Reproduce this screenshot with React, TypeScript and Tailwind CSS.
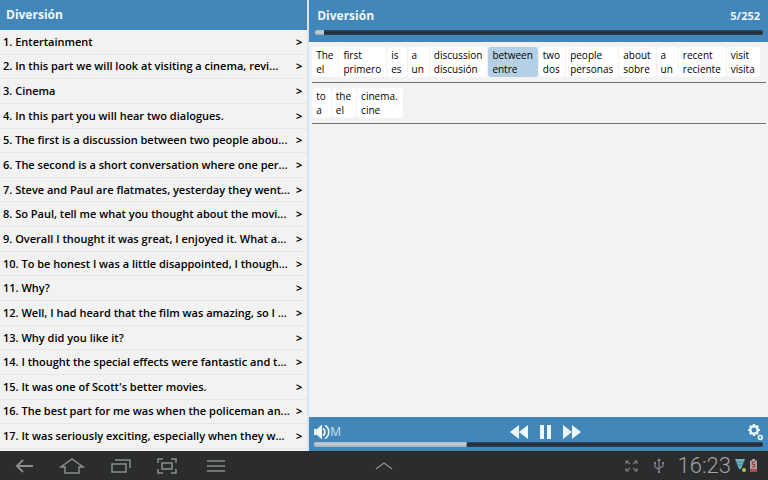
import { useState } from 'react';

interface Word {
  source: string;
  target: string;
}

const sentences = [
  'Entertainment',
  'In this part we will look at visiting a cinema, revi...',
  'Cinema',
  'In this part you will hear two dialogues.',
  'The first is a discussion between two people abou...',
  'The second is a short conversation where one per...',
  'Steve and Paul are flatmates, yesterday they went...',
  'So Paul, tell me what you thought about the movi...',
  'Overall I thought it was great, I enjoyed it. What a...',
  'To be honest I was a little disappointed, I though...',
  'Why?',
  'Well, I had heard that the film was amazing, so I ...',
  'Why did you like it?',
  'I thought the special effects were fantastic and t...',
  "It was one of Scott's better movies.",
  'The best part for me was when the policeman an...',
  'It was seriously exciting, especially when they w...',
];

const lines: Word[][] = [
  [
    { source: 'The', target: 'el' },
    { source: 'first', target: 'primero' },
    { source: 'is', target: 'es' },
    { source: 'a', target: 'un' },
    { source: 'discussion', target: 'discusión' },
    { source: 'between', target: 'entre' },
    { source: 'two', target: 'dos' },
    { source: 'people', target: 'personas' },
    { source: 'about', target: 'sobre' },
    { source: 'a', target: 'un' },
    { source: 'recent', target: 'reciente' },
    { source: 'visit', target: 'visita' },
  ],
  [
    { source: 'to', target: 'a' },
    { source: 'the', target: 'el' },
    { source: 'cinema.', target: 'cine' },
  ],
];

function Track({ label, value, onChange }: { label: string; value: number; onChange: (v: number) => void }) {
  return (
    <input
      type="range"
      aria-label={label}
      value={value}
      onChange={(e) => onChange(Number(e.target.value))}
      className="block h-[5px] w-full appearance-none rounded-xs bg-no-repeat [&::-webkit-slider-thumb]:appearance-none"
      style={{
        backgroundImage:
          'linear-gradient(#b4bcc4, #c3cbd3, #a3adb6), linear-gradient(#34495c, #1f2d3c, #2c4054)',
        backgroundSize: `${value}% 100%, 100% 100%`,
      }}
    />
  );
}

function SentenceList() {
  return (
    <aside className="flex w-2/5 flex-col">
      <h1 className="bg-[#4386ba] px-1.5 py-[5px] text-[12px] leading-5 font-bold text-[#eef8fc]">Diversión</h1>
      <ol className="flex flex-1 flex-col pb-0.5">
        {sentences.map((sentence, index) => (
          <li key={index} className="flex flex-1 border-b border-[#e6e6e6]">
            <button
              type="button"
              className="flex flex-1 items-center justify-between pr-[5px] pl-[3px] text-left text-[11px] leading-4 font-semibold whitespace-nowrap text-black"
            >
              <span>{index + 1}. {sentence}</span>
              <span aria-hidden="true" className="font-bold">&gt;</span>
            </button>
          </li>
        ))}
      </ol>
    </aside>
  );
}

function Player() {
  const [position, setPosition] = useState(2);
  const [seek, setSeek] = useState(34);
  const [selected, setSelected] = useState('0-5');

  return (
    <main className="flex min-w-0 flex-1 flex-col">
      <header className="bg-[#4386ba] pr-[5px] pb-[7px] pl-1.5 text-[#eef8fc]">
        <div className="flex justify-between pt-1.5 pr-[3px] pb-1 pl-0.5 text-[12px] leading-5 font-bold">
          <h2>Diversión</h2>
          <span className="text-[11px]">5/252</span>
        </div>
        <Track label="Sentence" value={position} onChange={setPosition} />
      </header>

      <section className="flex-1 pr-0.5 pl-[3px]">
        {lines.map((line, row) => (
          <div key={row} className="flex gap-px border-b border-[#707070] py-[5px]">
            {line.map((word, col) => (
              <button
                key={col}
                type="button"
                onClick={() => setSelected(`${row}-${col}`)}
                className={`rounded-[3px] py-px pr-[5px] pl-1 text-left text-[10px] leading-[14px] text-black ${
                  selected === `${row}-${col}` ? 'bg-[#b5d0e5]' : 'bg-white'
                }`}
              >
                <span className="block">{word.source}</span>
                <span className="block">{word.target}</span>
              </button>
            ))}
          </div>
        ))}
      </section>

      <footer className="bg-[#4386ba] pt-1 pr-[5px] pb-1 pl-[5px] text-[#eef8fc]">
        <div className="flex h-[21px] items-center justify-between">
          <button type="button" aria-label="Volume" className="flex items-center text-[12px] leading-4">
            <svg width="16" height="16" viewBox="0 0 16 16" fill="none" stroke="currentColor">
              <path d="M0 5h3l5-4.500v15L3 11H0z" fill="currentColor" stroke="none" />
              <path d="M9 4.500c2.500 1.500 2.500 5.500 0 7" strokeWidth="1.800" />
              <path d="M11 1.500c5 2.500 5 10.500 0 13" strokeWidth="1.600" />
            </svg>
            <span className="text-[#c9e2f0]">M</span>
          </button>
          <div className="flex items-center gap-3 pl-1">
            <button type="button" aria-label="Rewind">
              <svg width="18" height="14" viewBox="0 0 18 14" fill="currentColor">
                <path d="M0 7 9 0v14zM9 7 18 0v14z" />
              </svg>
            </button>
            <button type="button" aria-label="Pause">
              <svg width="11" height="14" viewBox="0 0 11 14" fill="currentColor">
                <path d="M0 0h4v14H0zM7 0h4v14H7z" />
              </svg>
            </button>
            <button type="button" aria-label="Fast forward">
              <svg width="18" height="14" viewBox="0 0 18 14" fill="currentColor">
                <path d="M9 7 0 0v14zM18 7 9 0v14z" />
              </svg>
            </button>
          </div>
          <button type="button" aria-label="Settings">
            <svg width="16" height="18" viewBox="0 0 16 18" fill="none" stroke="currentColor">
              <circle cx="7" cy="7" r="3.700" strokeWidth="2.400" />
              <path d="M7 1v2M7 11v2M1 7h2M11 7h2M2.800 2.800l1.400 1.400M9.800 9.800l1.400 1.400M2.800 11.200l1.400-1.400M9.800 4.200l1.400-1.400" strokeWidth="2.200" />
              <circle cx="13.300" cy="14.500" r="1.900" strokeWidth="1.500" />
            </svg>
          </button>
        </div>
        <Track label="Playback position" value={seek} onChange={setSeek} />
      </footer>
    </main>
  );
}

function SystemBar() {
  return (
    <nav className="grid h-[29px] grid-cols-3 items-center bg-[#2b2c2e] text-[#8b8d8f]">
      <div className="flex items-center gap-[26px] pl-[15px]">
        <button type="button" aria-label="Back">
          <svg width="18" height="14" viewBox="0 0 18 14" fill="none" stroke="currentColor" strokeWidth="1.800">
            <path d="M18 7H2M8 1 2 7l6 6" />
          </svg>
        </button>
        <button type="button" aria-label="Home">
          <svg width="26" height="16" viewBox="0 0 26 16" fill="none" stroke="currentColor" strokeWidth="1.500">
            <path d="M6 9H2L13 1l11 8h-4v6H6z" />
          </svg>
        </button>
        <button type="button" aria-label="Recent apps">
          <svg width="20" height="14" viewBox="0 0 20 14" fill="none" stroke="currentColor" strokeWidth="1.500">
            <path d="M1 5h14v8H1zM4 1h15v8" />
          </svg>
        </button>
        <button type="button" aria-label="Screenshot">
          <svg width="20" height="16" viewBox="0 0 20 16" fill="none" stroke="currentColor" strokeWidth="1.500">
            <path d="M5 5h10v6H5zM1 5V1h5M14 1h5v4M19 11v4h-5M6 15H1v-4" />
          </svg>
        </button>
        <button type="button" aria-label="Menu" className="ml-1">
          <svg width="18" height="12" viewBox="0 0 18 12" fill="none" stroke="currentColor" strokeWidth="1.400">
            <path d="M0 1h18M0 6h18M0 11h18" />
          </svg>
        </button>
      </div>
      <button type="button" aria-label="Show dock" className="justify-self-center">
        <svg width="18" height="8" viewBox="0 0 18 8" fill="none" stroke="currentColor" strokeWidth="1.200">
          <path d="m1 7 8-6 8 6" />
        </svg>
      </button>
      <div className="flex items-center justify-end pr-[11px]">
        <svg width="13" height="12" viewBox="0 0 13 12" fill="none" stroke="#77797b" strokeWidth="1.200" className="mr-4">
          <path d="M1 4V1h3M1 1l4 3M9 1h3v3M12 1 8 4M1 8v3h3M1 11l4-3M9 11h3V8M12 11 8 8" />
        </svg>
        <svg width="10" height="16" viewBox="0 0 10 16" fill="none" stroke="#85878a" className="mr-3.5">
          <path d="M5 2v12M1 5v4l4 2.500M9 5v3L5 10.500" strokeWidth="1.200" />
          <path d="m3 3 2-3 2 3zM0 4h2v2H0zM8 4h2v2H8zM4 13h2v2H4z" fill="#85878a" stroke="none" />
        </svg>
        <time className="font-[Roboto,sans-serif] text-[22px] leading-7 font-light text-[#a0a2a4]">16:23</time>
        <svg width="11" height="15" viewBox="0 0 11 15" className="mr-1 ml-1">
          <path d="M0 1h10L6 11H4z" fill="#6cb4c6" />
          <path d="M0 4h10M1 7h8" stroke="#356472" strokeWidth="0.700" />
          <circle cx="9" cy="12" r="2" fill="#a7c957" />
        </svg>
        <svg width="7" height="13" viewBox="0 0 7 13">
          <path d="M2 0h3v1.500h2V13H0V1.500h2z" fill="#a5a0a0" />
          <path d="M0 10h7v3H0z" fill="#b34a4a" />
          <path d="M5 3H2.500v2.500h2V8H2" fill="none" stroke="#a52f35" />
        </svg>
      </div>
    </nav>
  );
}

export default function App() {
  return (
    <div className="flex min-h-screen flex-col bg-[#f2f2f2] font-['Open_Sans','Noto_Sans',sans-serif]">
      <div className="flex flex-1">
        <SentenceList />
        <div className="w-0.5 bg-[#dce5ed]" />
        <Player />
      </div>
      <SystemBar />
    </div>
  );
}
